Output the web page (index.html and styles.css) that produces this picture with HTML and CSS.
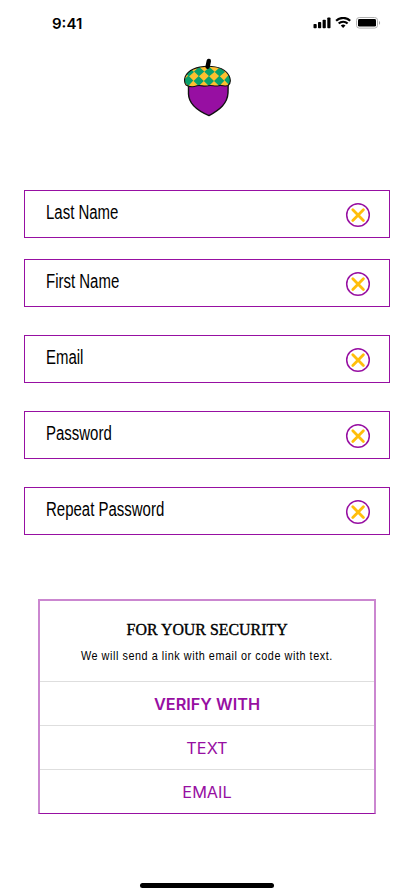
FILE: index.html
```html
<!DOCTYPE html>
<html lang="en">
<head>
<meta charset="utf-8">
<meta name="viewport" content="width=device-width, initial-scale=1">
<title>Sign up</title>
<link rel="stylesheet" href="styles.css">
</head>
<body>
<svg class="defs" width="0" height="0" aria-hidden="true">
  <symbol id="clear" viewBox="0 0 26 26">
    <circle cx="13" cy="13" r="11.3" fill="none" stroke="#970fa2" stroke-width="1.5"/>
    <path d="M7.8 7.8 18.4 18.4M18.4 7.8 7.8 18.4" fill="none" stroke="#ffbe0b" stroke-width="2.8" stroke-linecap="round"/>
  </symbol>
</svg>
<main class="screen">
  <header class="status">
    <span class="time">9:41</span>
    <svg class="signals" width="68" height="12" viewBox="0 0 68 12">
      <rect x="0.5" y="7" width="3.2" height="4.3" rx="0.8"/>
      <rect x="5" y="5" width="3.2" height="6.3" rx="0.8"/>
      <rect x="9.6" y="2.8" width="3.2" height="8.5" rx="0.8"/>
      <rect x="14.3" y="0.4" width="3.2" height="10.9" rx="0.8"/>
      <g fill="none" stroke="#000" stroke-width="2.1">
        <path d="M23.1 3.8C27-.1 33.3-.1 37.2 3.8"/>
        <path d="M25.7 6.6C28.1 4.1 32.2 4.1 34.6 6.6"/>
      </g>
      <path d="M27.8 8.6q2.35-2 4.7 0L30.15 11.1z"/>
      <rect x="43.5" y="0.5" width="21" height="10.6" rx="2.8" fill="none" stroke="#b0b0b0"/>
      <rect x="45" y="2" width="18" height="7.6" rx="1.4"/>
      <path d="M66 3.9v3.8c1.5-.7 1.5-3.1 0-3.8z" fill="#a6a6a6"/>
    </svg>
  </header>
  <svg class="logo" width="50" height="60" viewBox="0 0 50 60">
    <defs><clipPath id="cap"><path d="M3 27C1.5 25 1.1 22 2.2 18.7 5 12 14 8.3 24.5 8.3S43 11.6 46.2 18C48 22 47.5 25.5 45 27.5 42 29 38.7 26.5 35.5 27.7 31.5 29 28.8 26.5 25 27.8 21 29 18 26.8 14 27.8 10 29.4 6.2 29 3 27z"/></clipPath></defs>
    <path d="M5.5 26V36C5.8 46 13.5 52.3 26 57.6 37 51.5 44.4 45.5 45 35L45.2 26z" fill="#970fa2" stroke="#111" stroke-width="1.4" stroke-linejoin="round"/>
    <g clip-path="url(#cap)">
      <path d="M0 5h50v25H0z" fill="#fdc02f"/>
      <g fill="#08a06b">
        <path d="M6 9 11 14 6 18.5 1 14zM16.2 8.7 21.3 13.5 16 18.3 11 13.5zM26.5 9 31.7 13.7 26.2 18.3 21.3 13.7zM37 9 42 14 36.6 18.5 31.7 14z"/>
        <path d="M5.3 17.5 10.3 22.6 5.3 28 0 22.6zM15.7 18 20.8 23 15.7 28 10.5 23zM25.9 18 31 23 25.9 28 20.8 23zM36.3 17.8 41.3 22.8 36.3 28 31 23zM46 16.5 51 21.5 46 27 41.3 22z"/>
      </g>
    </g>
    <path d="M3 27C1.5 25 1.1 22 2.2 18.7 5 12 14 8.3 24.5 8.3S43 11.6 46.2 18C48 22 47.5 25.5 45 27.5 42 29 38.7 26.5 35.5 27.7 31.5 29 28.8 26.5 25 27.8 21 29 18 26.8 14 27.8 10 29.4 6.2 29 3 27z" fill="none" stroke="#111" stroke-width="1.1"/>
    <path d="M24.6 8.8 25.8 3" fill="none" stroke="#000" stroke-width="4.4" stroke-linecap="round"/>
  </svg>
  <form class="fields">
    <div class="field first"><label>Last Name</label><svg class="clear"><use href="#clear"/></svg></div>
    <div class="field"><label>First Name</label><svg class="clear"><use href="#clear"/></svg></div>
    <div class="field"><label>Email</label><svg class="clear"><use href="#clear"/></svg></div>
    <div class="field"><label>Password</label><svg class="clear"><use href="#clear"/></svg></div>
    <div class="field"><label>Repeat Password</label><svg class="clear"><use href="#clear"/></svg></div>
  </form>
  <section class="security">
    <div class="intro">
      <h1>FOR YOUR SECURITY</h1>
      <p>We will send a link with email or code with text.</p>
    </div>
    <div class="option strong">VERIFY WITH</div>
    <div class="option">TEXT</div>
    <div class="option">EMAIL</div>
  </section>
  <div class="home"></div>
</main>
</body>
</html>
```
FILE: styles.css
```css
* { box-sizing: border-box; }
body { margin: 0; background: #fff; color: #000; }
.defs { display: block; }
.screen { width: 414px; height: 896px; display: flex; flex-direction: column; overflow: hidden; }
.status { height: 56px; padding: 14px 33px 0 52px; display: flex; justify-content: space-between; align-items: flex-start; }
.time { font: 600 15px/20px Inter, sans-serif; }
.signals { margin-top: 3px; }
.logo { margin: 2px 0 0 183px; flex: none; }
.fields { margin: 72px 24px 0; display: flex; flex-direction: column; gap: 28px; }
.field { height: 48px; border: 1px solid #970fa2; padding: 0 18px 0 21px; display: flex; justify-content: space-between; }
.field.first { margin-bottom: -7px; }
.field label { font: 19.5px/24px "Liberation Sans", sans-serif; margin-top: 9px; transform: scaleX(.768); transform-origin: left; white-space: nowrap; }
.clear { width: 26px; height: 26px; margin-top: 11px; flex: none; }
.security { width: 338px; height: 215px; margin: 64px 0 0 38px; border: 2px solid #cb87d0; border-bottom: 1px solid #970fa2; text-align: center; }
.intro { height: 80px; padding-top: 18px; display: flex; flex-direction: column; align-items: center; }
h1 { margin: 0; font: 17px/22px "Liberation Serif", serif; -webkit-text-stroke: .4px #000; transform: scaleX(.935); white-space: nowrap; }
p { margin: 5px 0 0; font: 13.5px/20px "Liberation Sans", sans-serif; letter-spacing: .68px; transform: scaleX(.803); white-space: nowrap; }
.option { height: 44px; border-top: 1px solid #dedede; font: 400 16.3px/44px Inter, sans-serif; color: #970fa2; }
.strong { font-weight: 600; }
.home { width: 134px; height: 5px; margin: 69px 0 0 140px; background: #000; border-radius: 3px; }
```
